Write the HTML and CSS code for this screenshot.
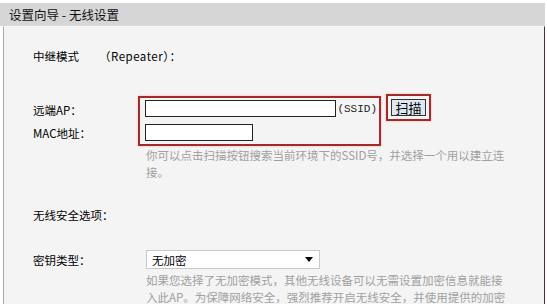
FILE: index.html
```html
<!DOCTYPE html>
<html lang="zh-CN">
<head>
  <meta charset="UTF-8">
  <title>设置向导 - 无线设置</title>
  <link rel="stylesheet" href="styles.css">
</head>
<body>
  <div class="panel">
    <div class="title">设置向导 - 无线设置</div>
    <div class="content">
      <div class="row mode-row">
        <span class="label">中继模式</span>
        <span class="mode">（Repeater）：</span>
      </div>

      <div class="scan-group">
        <div class="scan-labels">
          <div class="label">远端AP：</div>
          <div class="label">MAC地址：</div>
        </div>
        <div class="red-box">
          <div class="field-line">
            <input type="text" class="input-ssid">
            <span class="unit">(SSID)</span>
          </div>
          <div class="field-line">
            <input type="text" class="input-mac">
          </div>
        </div>
        <div class="scan-box">
          <button class="scan-btn">扫描</button>
        </div>
      </div>

      <p class="hint">你可以点击扫描按钮搜索当前环境下的SSID号，并选择一个用以建立连接。</p>

      <div class="row sec-row">
        <span class="label">无线安全选项：</span>
      </div>

      <div class="row key-row">
        <span class="label key-label">密钥类型：</span>
        <div class="select">
          <span>无加密</span>
          <span class="arrow"></span>
        </div>
      </div>

      <p class="hint">如果您选择了无加密模式，其他无线设备可以无需设置加密信息就能接入此AP。为保障网络安全，强烈推荐开启无线安全，并使用提供的加密方式。</p>
    </div>
  </div>
</body>
</html>
```

FILE: styles.css
```css
body {
  margin: 0;
  background-color: #fff;
  font-family: "Noto Sans CJK SC", "DejaVu Sans", sans-serif;
  font-size: 11.5px;
  color: #000;
  overflow: hidden;
}
.panel {
  width: 545px;
  margin-top: 3px;
}
.title {
  height: 23px;
  line-height: 23px;
  padding-left: 9px;
  background-color: #d6d6d6;
  font-size: 12.5px;
  color: #111;
}
.content {
  margin-left: 3px;
  height: 277px;
  overflow: hidden;
  background-color: #f4f4f4;
  border-left: 1px solid #b4a4a4;
  border-right: 1px solid #4a3030;
  border-top: 1px solid #fafafa;
  padding-left: 29px;
}
.row {
  display: flex;
  align-items: center;
}
.label {
  line-height: 16px;
}
.mode-row {
  padding-top: 21px;
}
.mode-row .label {
  width: 66px;
}
.mode {
  letter-spacing: 0.5px;
}
.scan-group {
  display: flex;
  align-items: flex-start;
  margin-top: 30px;
}
.scan-labels {
  width: 105px;
  padding-top: 8px;
  display: flex;
  flex-direction: column;
  gap: 7px;
}
.red-box {
  margin-top: 2px;
  width: 232px;
  padding: 2px 2px 3px 5px;
  border: 2px solid #a42a2a;
  box-shadow: 0 0 2px #f2b0b0;
  display: flex;
  flex-direction: column;
  gap: 7px;
}
.field-line {
  display: flex;
  align-items: center;
  height: 17px;
}
input {
  box-sizing: border-box;
  height: 17px;
  border: 1px solid #222;
  background-color: #fff;
  padding: 0;
  margin: 0;
}
.input-ssid {
  width: 195px;
}
.input-mac {
  width: 108px;
}
.unit {
  margin-left: 1px;
  font-family: "Liberation Mono", monospace;
  font-size: 11px;
  color: #222;
}
.scan-box {
  margin-left: 5px;
  width: 41px;
  height: 23px;
  border: 2px solid #a42a2a;
  box-shadow: 0 0 2px #f2b0b0;
  display: flex;
  align-items: center;
  justify-content: center;
}
.scan-btn {
  height: 17px;
  width: 35px;
  padding: 0;
  border: 1px solid #333;
  background-color: #dfe8f2;
  font-family: "Noto Sans CJK SC", sans-serif;
  font-size: 13px;
  line-height: 15px;
  color: #000;
}
.hint {
  margin: 1px 0 0 113px;
  width: 365px;
  line-height: 17px;
  color: #a0a0a0;
}
.sec-row {
  margin-top: 26px;
}
.key-row {
  margin-top: 27px;
}
.key-label {
  width: 113px;
}
.select {
  box-sizing: border-box;
  width: 174px;
  height: 19px;
  border: 1px solid #c8c8c8;
  background-color: #fff;
  display: flex;
  align-items: center;
  justify-content: space-between;
  padding: 0 6px 0 5px;
}
.arrow {
  width: 0;
  height: 0;
  border-left: 4px solid transparent;
  border-right: 4px solid transparent;
  border-top: 5px solid #000;
}
.key-row + .hint {
  margin-top: 3px;
}
```
